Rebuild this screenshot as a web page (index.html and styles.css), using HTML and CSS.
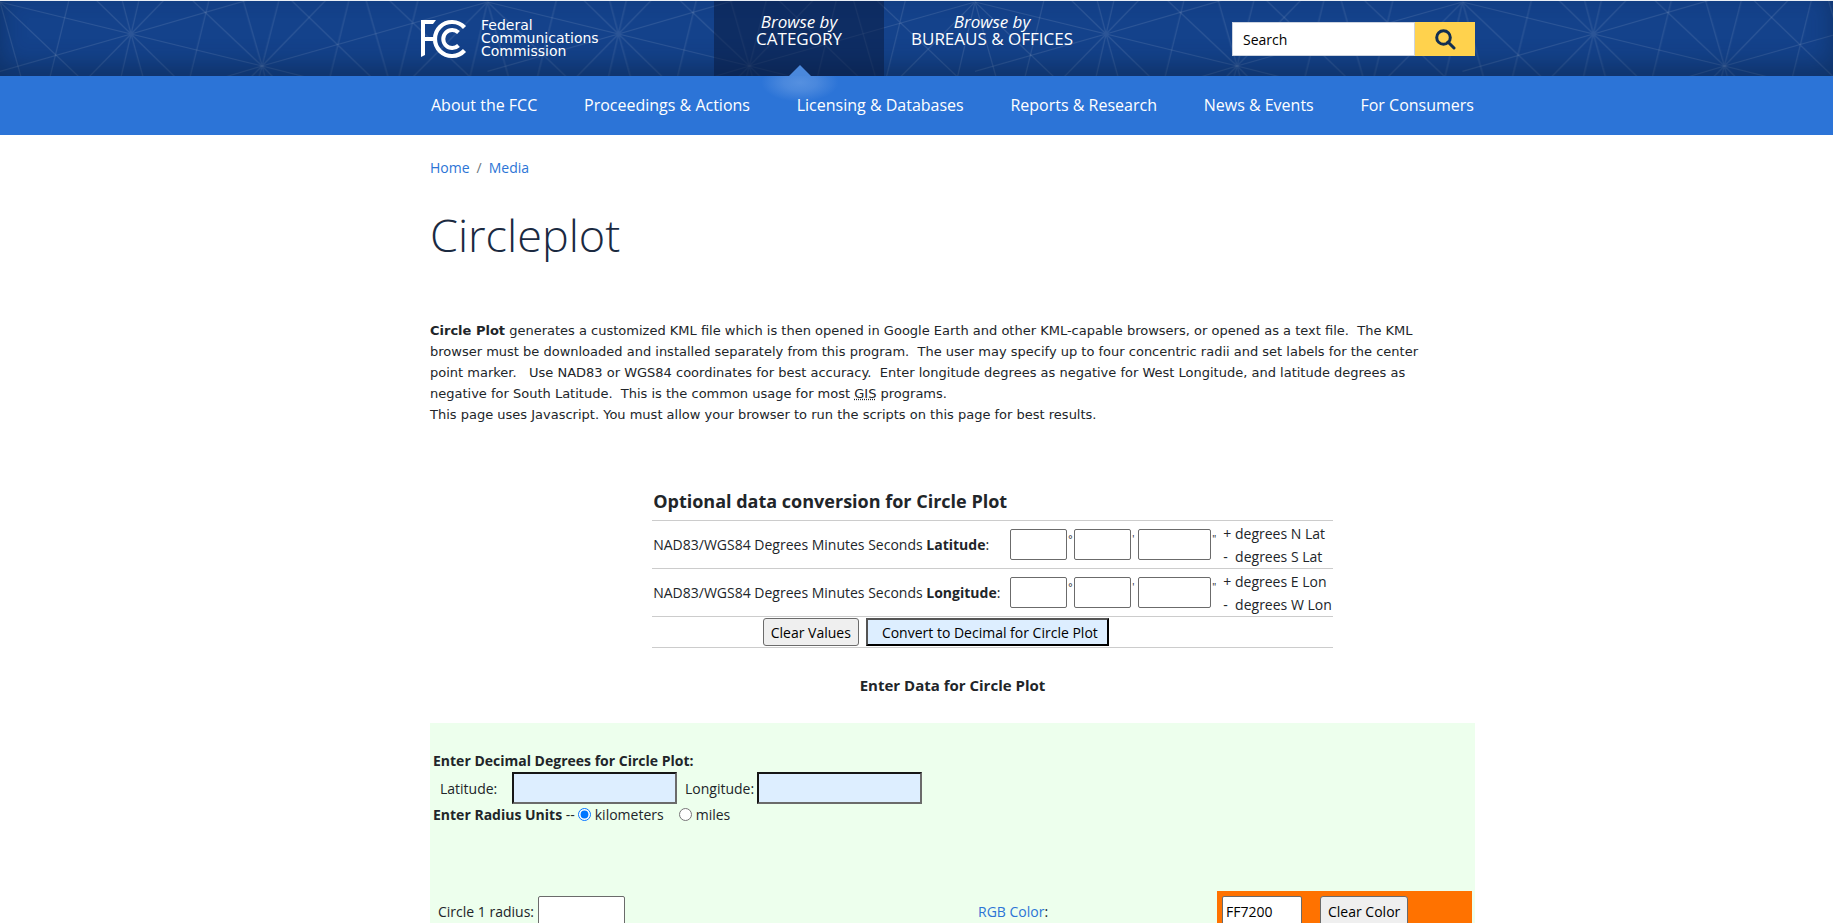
FILE: index.html
```html
<!DOCTYPE html>
<html lang="en">
<head>
<meta charset="UTF-8">
<meta name="viewport" content="width=device-width, initial-scale=1.0">
<title>Circleplot</title>
<link rel="stylesheet" href="styles.css">
</head>
<body>
<header class="masthead">
	<svg class="masthead-lines" width="100%" height="100%" aria-hidden="true">
		<defs>
			<pattern id="net" width="487.5" height="76" patternUnits="userSpaceOnUse">
				<g stroke="#fff" stroke-opacity=".1" stroke-width="1.2" fill="none">
					<path d="M0 1L131 33L262 65L306 76M-20 76L131 33L248 -1M96 -1L131 33L175 76M164 -1L131 33L89 76M122 -1L131 33L143 76M139 -1L131 33L121 76"/>
					<path d="M0 1L21 76M0 1L79 76M487.5 1L262 65L225 76M487.5 1L413 76M487.5 1L470 76"/>
					<path d="M192 -1L262 65L273 76M326 -1L262 65L251 76M243 -1L262 65L265 76M279 -1L262 65L259 76"/>
					<path d="M69 -1L50 76M209 -1L190 76M349 -1L330 76M418 -1L399 76M366 -1L388 76M291 -1L371 76M389 -1L470 76"/>
				</g>
			</pattern>
		</defs>
		<rect width="100%" height="100%" fill="url(#net)"/>
	</svg>
	<div class="wrap masthead-inner">
		<a class="logo" href="#">
			<svg width="46" height="40" viewBox="0 0 46 40" aria-hidden="true">
				<path d="M0 1H15L12 5H4V18H12V22H4V36L0 38Z" fill="#fff"/>
				<path d="M43.500 8.500A17 17 0 1 0 43.500 31.500" fill="none" stroke="#fff" stroke-width="4.200"/>
				<path d="M37.500 13.500A9 9 0 1 0 37.500 26.500" fill="none" stroke="#fff" stroke-width="4"/>
			</svg>
			<span class="logo-name">Federal<br>Communications<br>Commission</span>
		</a>
		<div class="browse">
			<a class="browse-item active" href="#"><em>Browse by</em>CATEGORY</a>
			<a class="browse-item" href="#"><em>Browse by</em>BUREAUS &amp; OFFICES</a>
		</div>
		<form class="search">
			<input class="search-text" type="text" value="Search" aria-label="Search">
			<button class="search-btn" type="button" aria-label="Search">
				<svg width="21" height="21" viewBox="0 0 21 21" fill="none" stroke="#112e51" stroke-width="3">
					<circle cx="8.500" cy="8.500" r="6.800"/>
					<path d="M13 13L19 19" stroke-linecap="round"/>
				</svg>
			</button>
		</form>
	</div>
</header>
<nav class="mainnav">
	<div class="wrap mainnav-inner">
		<a href="#">About the FCC</a>
		<a href="#">Proceedings &amp; Actions</a>
		<a href="#">Licensing &amp; Databases</a>
		<a href="#">Reports &amp; Research</a>
		<a href="#">News &amp; Events</a>
		<a href="#">For Consumers</a>
	</div>
</nav>

<main class="wrap">
	<div class="crumbs"><a href="#">Home</a><span class="slash">/</span><a href="#">Media</a></div>
	<h1>Circleplot</h1>

	<p class="intro"><strong>Circle Plot</strong> generates a customized KML file which is then opened in Google Earth and other KML-capable browsers, or opened as a text file.&nbsp; The KML browser must be downloaded and installed separately from this program.&nbsp; The user may specify up to four concentric radii and set labels for the center point marker.&nbsp;&nbsp; Use NAD83 or WGS84 coordinates for best accuracy.&nbsp; Enter longitude degrees as negative for West Longitude, and latitude degrees as negative for South Latitude.&nbsp; This is the common usage for most <abbr title="Geographic Information System">GIS</abbr> programs.<br>
	This page uses Javascript. You must allow your browser to run the scripts on this page for best results.</p>

	<form class="convert">
		<table class="convert-table">
			<caption>Optional data conversion for Circle Plot</caption>
			<tr>
				<td>NAD83/WGS84 Degrees Minutes Seconds <strong>Latitude</strong>:</td>
				<td><div class="dms">
					<input type="text" aria-label="Latitude degrees"><sup>&deg;</sup>
					<input type="text" aria-label="Latitude minutes"><sup>'</sup>
					<input class="sec" type="text" aria-label="Latitude seconds"><sup>"</sup>
				</div></td>
				<td class="signs">+ degrees N Lat<br>-&nbsp; degrees S Lat</td>
			</tr>
			<tr>
				<td>NAD83/WGS84 Degrees Minutes Seconds <strong>Longitude</strong>:</td>
				<td><div class="dms">
					<input type="text" aria-label="Longitude degrees"><sup>&deg;</sup>
					<input type="text" aria-label="Longitude minutes"><sup>'</sup>
					<input class="sec" type="text" aria-label="Longitude seconds"><sup>"</sup>
				</div></td>
				<td class="signs">+ degrees E Lon<br>-&nbsp; degrees W Lon</td>
			</tr>
			<tr>
				<td colspan="2"><div class="convert-buttons">
					<button class="btn" type="reset">Clear Values</button>
					<button class="btn-convert" type="button">Convert to Decimal for Circle Plot</button>
				</div></td>
				<td></td>
			</tr>
		</table>
	</form>

	<h2>Enter Data for Circle Plot</h2>

	<form class="plot">
		<strong>Enter Decimal Degrees for Circle Plot:</strong>
		<div class="decimal">
			<label class="lat" for="dlat">Latitude:</label><input id="dlat" type="text">
			<label class="lon" for="dlon">Longitude:</label><input id="dlon" type="text">
		</div>
		<div class="units">
			<strong>Enter Radius Units</strong>&nbsp;--
			<input type="radio" name="unit" id="km" checked><label for="km">kilometers</label>
			<input type="radio" name="unit" id="mi"><label for="mi">miles</label>
		</div>
		<div class="circle-row">
			<div class="radius"><label for="r1">Circle 1 radius:</label><input id="r1" type="text"></div>
			<div class="rgb"><a href="#">RGB Color</a>:</div>
			<div class="swatch">
				<input type="text" value="FF7200" aria-label="Circle 1 color">
				<button class="btn" type="button">Clear Color</button>
			</div>
		</div>
	</form>
</main>
</body>
</html>
```
FILE: styles.css
```css
* {
	box-sizing: border-box;
}
body {
	margin: 0;
	font: 14px/23px "Open Sans", "Noto Sans", sans-serif;
	color: #212529;
	background: #fff;
}
a {
	color: #2c74d6;
	text-decoration: none;
}
input, button {
	font: inherit;
	margin: 0;
}

/* 72px on the left keeps the columns right of centre */
.wrap {
	max-width: 1117px;
	margin: 0 auto;
	padding-left: 72px;
}

/* header */
.masthead {
	position: relative;
	height: 76px;
	border-top: 1px solid #e9eef5;
	background: #14428b;
}
.masthead::after {
	content: "";
	position: absolute;
	top: 0;
	right: 0;
	bottom: 0;
	left: 0;
	box-shadow: inset 0 -10px 24px rgba(8,30,60,.45);
	pointer-events: none;
}
.masthead-lines {
	position: absolute;
	top: 0;
	left: 0;
}
.masthead-inner {
	position: relative;
	z-index: 1;
	display: flex;
	height: 75px;
	padding-left: 63px;
}
.logo {
	display: flex;
	align-items: center;
	gap: 14px;
	width: 293px;
	color: #fff;
}
.logo-name {
	font: 14px/13px "DejaVu Sans", sans-serif;
}
.browse {
	display: flex;
}
.browse-item {
	position: relative;
	min-width: 170px;
	padding: 12px 27px;
	color: #fff;
	font-size: 17px;
	line-height: 17px;
	text-align: center;
}
.browse-item em {
	display: block;
}
.browse-item.active {
	background: rgba(8,24,60,.5);
}
.browse-item.active::before {
	content: "";
	position: absolute;
	top: 75px;
	left: 47px;
	width: 78px;
	height: 26px;
	background: radial-gradient(ellipse at 50% 25%, #5590e0 0, #4a88dd 30%, rgba(44,116,214,0) 70%);
}
.browse-item.active::after {
	content: "";
	position: absolute;
	bottom: 0;
	left: 50%;
	margin-left: -10px;
	border: 11px solid transparent;
	border-top: 0;
	border-bottom-color: #4a88dc;
}
.search {
	display: flex;
	align-self: flex-start;
	width: 243px;
	height: 34px;
	margin: 21px 0 0 auto;
}
.search-text {
	flex: 1;
	min-width: 0;
	padding: 0 10px;
	border: 1px solid #ccd3df;
	color: #000;
}
.search-btn {
	display: flex;
	align-items: center;
	justify-content: center;
	width: 60px;
	padding: 0;
	border: 0;
	background: #ffd24d;
}

.mainnav {
	background: #2c74d7;
}
.mainnav-inner {
	display: flex;
	justify-content: space-between;
	padding: 0 1px 0 73px;
}
.mainnav a {
	position: relative;
	z-index: 1;
	color: #fff;
	font-size: 16px;
	line-height: 59px;
}

/* page head */
.crumbs {
	padding-top: 21px;
}
.slash {
	margin: 0 7px;
	color: #6c757d;
}
h1 {
	margin: 17px 0 0;
	color: #1b2a41;
	font-size: 45px;
	font-weight: 300;
	line-height: 78px;
}
.intro {
	margin: 46px 0 0;
	padding-right: 40px;
	font: 13px/21px Verdana, "DejaVu Sans", sans-serif;
}

/* conversion table */
.convert {
	display: flex;
	justify-content: center;
	margin-top: 64px;
	padding-left: 80px;
}
.convert-table {
	border-collapse: collapse;
	color: #212529;
}
.convert-table caption {
	padding: 0 1px 7px;
	font-size: 18px;
	font-weight: 700;
	line-height: 24px;
	text-align: left;
}
.convert-table td {
	padding: 1px;
	border-top: 1px solid #ccc;
	border-bottom: 1px solid #ccc;
}
.dms {
	display: flex;
	padding-left: 8px;
}
.dms input {
	width: 57px;
	height: 31px;
	border: 1px solid #6b6b6b;
	border-radius: 2px;
}
.dms .sec {
	width: 73px;
}
.dms sup {
	width: 7px;
	padding-left: 1px;
	font-size: 10px;
	line-height: 20px;
}
.convert-table .signs {
	padding: 1px 1px 0 4px;
}
.convert-buttons {
	display: flex;
	justify-content: center;
	gap: 7px;
}
.btn {
	height: 28px;
	padding: 0 7px;
	border: 1px solid #6b6b6b;
	border-radius: 3px;
	background: #efefef;
	color: #000;
}
.btn-convert {
	height: 28px;
	padding: 0 9px 0 14px;
	border: 2px outset #000;
	background: #def;
	color: #000;
}

h2 {
	margin: 26px 0;
	font-size: 15px;
	font-weight: 700;
	line-height: 23px;
	text-align: center;
}

/* plot form */
.plot {
	padding: 26px 3px 0;
	background: #edffed;
}
.decimal {
	display: flex;
	align-items: center;
}
.decimal input {
	width: 165px;
	height: 32px;
	border: 2px inset #6b6b6b;
	background: #def;
}
.lat {
	width: 79px;
	padding-left: 7px;
}
.lon {
	padding: 0 3px 0 8px;
}
.units {
	display: flex;
	align-items: center;
	line-height: 22px;
}
.units input {
	width: 13px;
	height: 13px;
	margin: 0 4px 2px 3px;
}
.units label + input {
	margin-left: 15px;
}
.circle-row {
	display: grid;
	grid-template-columns: 1fr 239px 255px;
	align-items: center;
	margin-top: 65px;
}
.circle-row input, .circle-row button {
	height: 31px;
}
.circle-row input {
	border: 1px solid #6b6b6b;
	border-radius: 2px;
}
.radius {
	padding-left: 5px;
}
.radius input {
	width: 87px;
	margin-left: 4px;
}
.swatch {
	display: flex;
	gap: 18px;
	padding: 5px;
	background: #ff7200;
}
.swatch input {
	width: 80px;
	padding: 0 3px;
}
```
